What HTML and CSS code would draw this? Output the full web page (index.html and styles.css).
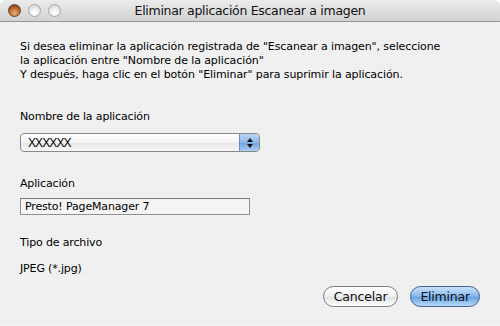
FILE: index.html
```html
<!DOCTYPE html>
<html>
<head>
<meta charset="utf-8">
<link rel="stylesheet" href="styles.css">
</head>
<body>
<div class="window">
  <div class="titlebar">
    <div class="lights">
      <span class="light close"></span>
      <span class="light"></span>
      <span class="light"></span>
    </div>
    <div class="title">Eliminar aplicación Escanear a imagen</div>
  </div>
  <div class="content">
    <p class="intro">Si desea eliminar la aplicación registrada de "Escanear a imagen", seleccione<br>la aplicación entre "Nombre de la aplicación"<br>Y después, haga clic en el botón "Eliminar" para suprimir la aplicación.</p>
    <div class="label l-name">Nombre de la aplicación</div>
    <div class="popup">
      <span class="popup-text">XXXXXX</span>
      <span class="popup-arrows">
        <svg width="8" height="12" viewBox="0 0 8 12"><path d="M4 1 L7 5 L1 5 Z" fill="#111"/><path d="M1 7 L7 7 L4 11 Z" fill="#111"/></svg>
      </span>
    </div>
    <div class="label l-app">Aplicación</div>
    <div class="field">Presto! PageManager 7</div>
    <div class="label l-type">Tipo de archivo</div>
    <div class="value">JPEG (*.jpg)</div>
    <div class="buttons">
      <button class="btn">Cancelar</button>
      <button class="btn default">Eliminar</button>
    </div>
  </div>
</div>
</body>
</html>
```

FILE: styles.css
```css
html, body {
  margin: 0;
  padding: 0;
  background: #ffffff;
}
body {
  width: 500px;
  height: 326px;
  overflow: hidden;
  font-family: "DejaVu Sans", sans-serif;
  font-size: 11px;
  color: #000;
}
.window {
  width: 500px;
  height: 326px;
  border-radius: 6px 6px 0 0;
  overflow: hidden;
  background: repeating-linear-gradient(to bottom, #ededed 0, #ededed 1px, #f2f2f2 1px, #f2f2f2 2px);
  display: flex;
  flex-direction: column;
}
.titlebar {
  height: 21px;
  flex: none;
  position: relative;
  background: linear-gradient(to bottom, #ececec 0%, #dedede 50%, #d2d2d2 100%);
  border-bottom: 1px solid #9a9a9a;
  display: flex;
  align-items: center;
}
.lights {
  display: flex;
  gap: 7px;
  padding-left: 8px;
}
.light {
  width: 13px;
  height: 13px;
  border-radius: 50%;
  box-sizing: border-box;
  border: 1px solid #a9a9a9;
  background: radial-gradient(circle at 50% 70%, #ffffff 0%, #eeeeee 45%, #c8c8c8 100%);
}
.light.close {
  border-color: #6d3e1e;
  background: radial-gradient(circle at 50% 75%, #e9b07a 0%, #b86c34 50%, #6e3510 100%);
}
.title {
  position: absolute;
  left: 0;
  right: 0;
  top: 3px;
  text-align: center;
  font-size: 12.5px;
  letter-spacing: -0.3px;
  color: #111;
}
.content {
  padding: 0 20px 0 20px;
  display: flex;
  flex-direction: column;
  position: relative;
  flex: 1;
}
.intro {
  margin: 18px 0 0 0;
  line-height: 14px;
  letter-spacing: -0.1px;
}
.label {
  letter-spacing: -0.15px;
  line-height: 14px;
}
.l-name { margin-top: 28px; }
.popup {
  margin-top: 9px;
  width: 240px;
  height: 19px;
  box-sizing: border-box;
  border: 1px solid #8a8a8a;
  border-radius: 4px;
  background: linear-gradient(to bottom, #ffffff 0%, #f4f4f4 50%, #e6e6e6 51%, #f8f8f8 100%);
  display: flex;
  align-items: center;
  justify-content: space-between;
  overflow: hidden;
}
.popup-text {
  padding-left: 7px;
  letter-spacing: -0.9px;
  font-family: "Liberation Sans", sans-serif;
  font-size: 12px;
}
.popup-arrows {
  width: 19px;
  height: 17px;
  display: flex;
  align-items: center;
  justify-content: center;
  border-left: 1px solid #6f8db5;
  background: linear-gradient(to bottom, #bcd6f3 0%, #8cb6e6 50%, #6fa1dd 51%, #a9cff5 100%);
}
.l-app { margin-top: 25px; }
.field {
  margin-top: 7px;
  width: 230px;
  height: 17px;
  box-sizing: border-box;
  border: 1px solid #8f8f8f;
  border-top-color: #777;
  background: #f4f4f4;
  padding-left: 4px;
  line-height: 15px;
  letter-spacing: -0.15px;
}
.l-type { margin-top: 21px; }
.value {
  margin-top: 12px;
  line-height: 14px;
  letter-spacing: -0.15px;
}
.buttons {
  display: flex;
  justify-content: flex-end;
  gap: 12px;
  margin-top: 10px;
  padding-right: 0;
}
.btn {
  font-family: "DejaVu Sans", sans-serif;
  font-size: 12.5px;
  height: 21px;
  border-radius: 11px;
  border: 1px solid #7a7a7a;
  background: linear-gradient(to bottom, #ffffff 0%, #f2f2f2 45%, #e2e2e2 55%, #ffffff 100%);
  padding: 0 10px;
  color: #111;
  line-height: 19px;
  letter-spacing: -0.2px;
}
.btn.default {
  padding: 0 9px;
  border-color: #3f5f8f;
  background: linear-gradient(to bottom, #c9e1fa 0%, #8dbcef 45%, #6aa4e6 55%, #b8daf9 100%);
}
```
